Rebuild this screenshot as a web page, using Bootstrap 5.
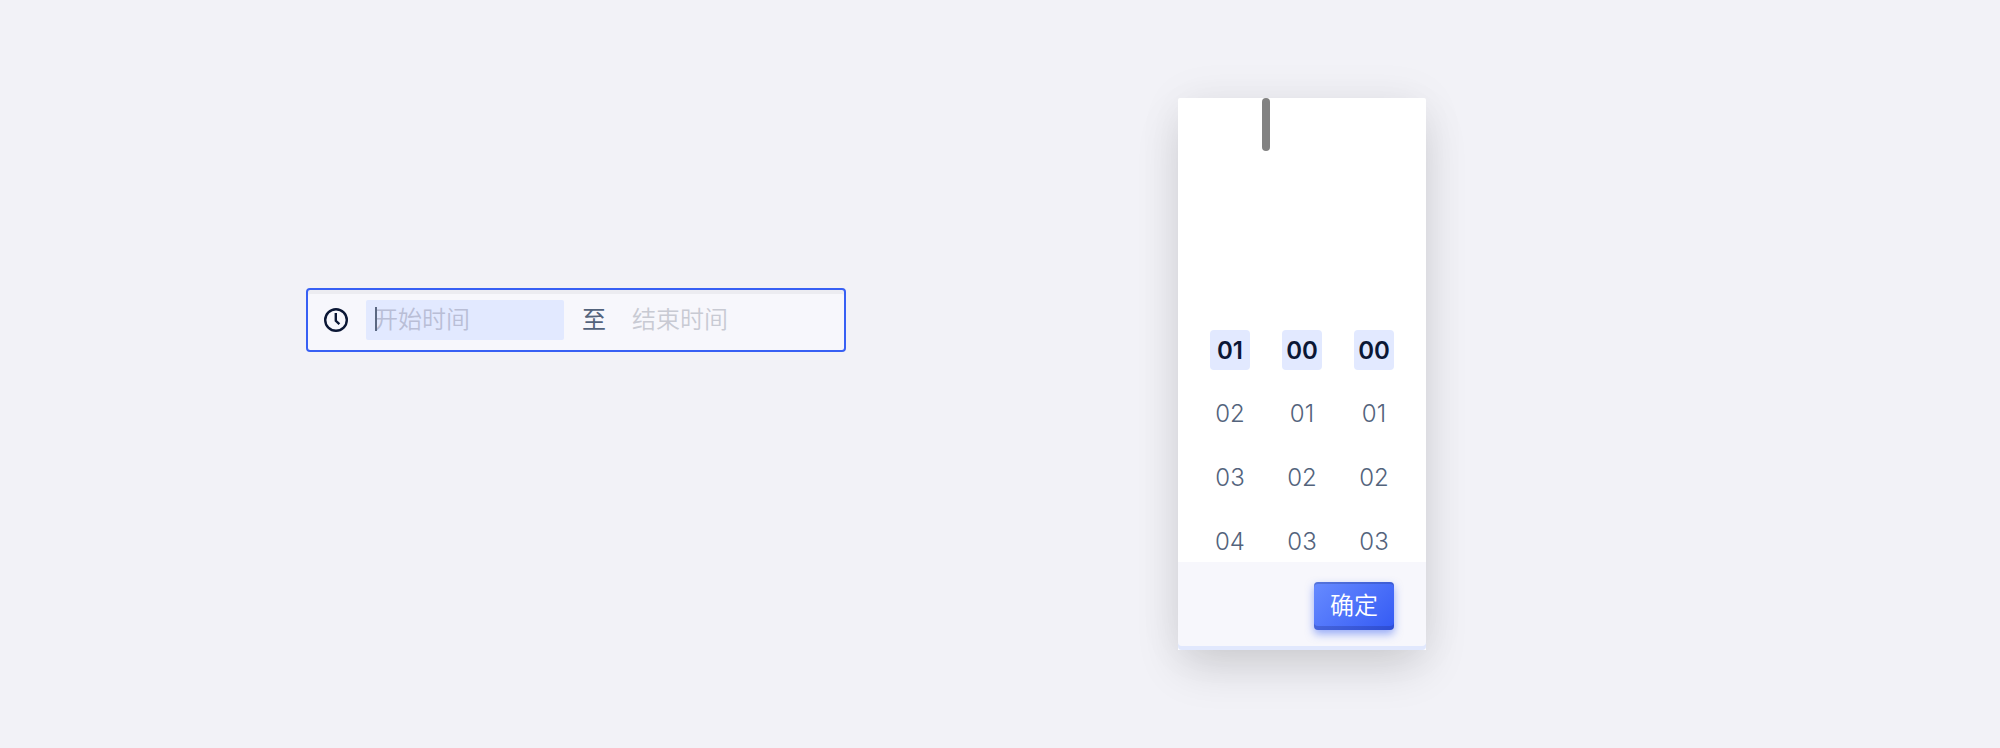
<!DOCTYPE html>
<html lang="zh-CN">
<head>
<meta charset="utf-8">
<meta name="viewport" content="width=device-width, initial-scale=1">
<title>时间选择器</title>
<link href="https://cdn.jsdelivr.net/npm/bootstrap@5.3.0/dist/css/bootstrap.min.css" rel="stylesheet">
<style>
  body { background: #f2f2f7; font-family: Inter, "Noto Sans CJK SC", sans-serif; font-size: 24px; line-height: 40px; color: #53637c; }
  .stage { height: 748px; padding-left: 306px; gap: 332px; }
  .range-field { width: 540px; height: 64px; margin-top: 288px; border: 2px solid #3860f4; border-radius: 4px; background: #f7f7fc; box-shadow: inset 0 4px 0 #ececf1; padding: 0 14px; }
  .range-cell { height: 40px; padding: 0 8px; border-radius: 2px; font-weight: 350; color: #c8cad3; white-space: nowrap; }
  .range-cell.is-start { width: 198px; margin-left: 16px; background: #e2e9ff; color: #b9bed6; }
  .caret { left: 9px; top: 7px; width: 2px; height: 24px; background: #5b6882; }
  .range-sep { margin: 0 18px; font-weight: 400; }
  .time-panel { width: 248px; height: 552px; margin-top: 98px; background: #fff; border-radius: 2px 2px 0 0; box-shadow: 0 0 48px rgba(0,0,0,.05), 0 20px 44px -4px rgba(0,0,0,.14); }
  .thumb { left: 84px; top: 0; width: 8px; height: 53px; border-radius: 4px; background: #828282; }
  .time-cols { height: 464px; padding: 232px 32px 0; }
  .time-col { width: 40px; gap: 24px; }
  .time-item { height: 40px; font-weight: 350; text-align: center; flex-shrink: 0; }
  .time-item.is-on { background: #e2e9ff; border-radius: 4px; font-weight: 600; line-height: 41px; color: #0b1735; }
  .panel-foot { height: 88px; padding: 20px 32px; background: #f7f7fc; box-shadow: inset 0 -4px 0 #e1e8fd; border-radius: 0 0 4px 4px; }
  .btn-confirm { width: 80px; height: 48px; padding: 0; border: 0; border-radius: 4px; font-size: 24px; font-weight: 350; line-height: 46px; color: #fff; background: linear-gradient(135deg, #678bff, #345af4); box-shadow: inset 0 2px 0 rgba(25,35,90,.22), inset 0 -4px 0 rgba(25,35,120,.25), 0 4px 8px rgba(56,96,244,.5); }
</style>
</head>
<body>
<main class="stage d-flex align-items-start">
  <div class="range-field d-flex align-items-center">
    <svg class="flex-shrink-0" width="28" height="28" viewBox="0 0 28 28" fill="none" stroke="#0b1735" stroke-width="2.4"><circle cx="14" cy="14" r="10.8"/><path d="M13.8 7v7.8l3.6 3.4"/></svg>
    <div class="range-cell is-start position-relative">开始时间<span class="caret position-absolute"></span></div>
    <span class="range-sep">至</span>
    <div class="range-cell">结束时间</div>
  </div>
  <section class="time-panel position-relative">
    <span class="thumb position-absolute"></span>
    <div class="time-cols d-flex justify-content-between overflow-hidden">
      <div class="time-col d-flex flex-column"><div class="time-item is-on">01</div><div class="time-item">02</div><div class="time-item">03</div><div class="time-item">04</div></div>
      <div class="time-col d-flex flex-column"><div class="time-item is-on">00</div><div class="time-item">01</div><div class="time-item">02</div><div class="time-item">03</div></div>
      <div class="time-col d-flex flex-column"><div class="time-item is-on">00</div><div class="time-item">01</div><div class="time-item">02</div><div class="time-item">03</div></div>
    </div>
    <div class="panel-foot d-flex justify-content-end"><button type="button" class="btn btn-confirm">确定</button></div>
  </section>
</main>
<script src="https://cdn.jsdelivr.net/npm/bootstrap@5.3.0/dist/js/bootstrap.bundle.min.js"></script>
</body>
</html>
